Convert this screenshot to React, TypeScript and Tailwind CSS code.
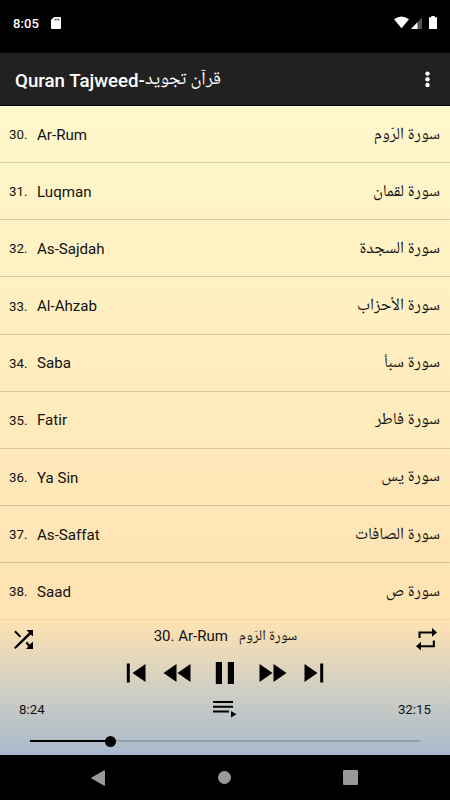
import type { ReactNode } from "react";

type Surah = {
  id: number;
  name: string;
  arabic: string;
};

const SURAHS: Surah[] = [
  { id: 30, name: "Ar-Rum", arabic: "سورة الرَوم" },
  { id: 31, name: "Luqman", arabic: "سورة لقمان" },
  { id: 32, name: "As-Sajdah", arabic: "سورة السجدة" },
  { id: 33, name: "Al-Ahzab", arabic: "سورة الأحزاب" },
  { id: 34, name: "Saba", arabic: "سورة سبأ" },
  { id: 35, name: "Fatir", arabic: "سورة فاطر" },
  { id: 36, name: "Ya Sin", arabic: "سورة يس" },
  { id: 37, name: "As-Saffat", arabic: "سورة الصافات" },
  { id: 38, name: "Saad", arabic: "سورة ص" }
];

const ARABIC = "font-['Noto_Naskh_Arabic_UI','Noto_Sans_Arabic','DejaVu_Sans',sans-serif]";

function StatusBar() {
  return (
    <div className="flex h-[53px] shrink-0 items-start bg-black pl-[13px] text-white">
      <span className="mt-[15px] text-[13px] leading-[17px] font-medium tracking-[0.1px]">8:05</span>
      <svg className="mt-[17px] ml-[12px]" width="10" height="12" viewBox="0 0 10 12">
        <path fill="#fff" d="M3 0h6q1 0 1 1v10q0 1-1 1H1q-1 0-1-1V3z" />
        <path stroke="#000" strokeWidth=".8" d="M4.2 1.6v2M6 1.6v2M7.8 1.6v2" />
      </svg>
      <div className="mt-[16px] ml-auto flex pr-[13px]">
        <svg width="15" height="13" viewBox="0 0 15 13">
          <path fill="#fff" d="M0 3.2Q7.5-2.4 15 3.2L7.5 12.2z" />
        </svg>
        <svg className="ml-[2px]" width="11" height="13" viewBox="0 0 11 13">
          <path fill="#555" d="M11 1.5V13H0z" />
          <path fill="#fff" d="M6.5 6.2V13H0z" />
        </svg>
        <svg className="ml-[7px]" width="8" height="13" viewBox="0 0 8 13">
          <path fill="#fff" d="M2.3 0h3.4v1.2H8V13H0V1.2h2.3z" />
        </svg>
      </div>
    </div>
  );
}

function AppBar() {
  return (
    <header className="flex h-[53px] shrink-0 items-center border-b border-black bg-[#212121] pr-[20px] pl-[15px] text-white">
      <h1 className="flex items-center pt-[3px] text-[18.7px] leading-[24px] font-medium whitespace-nowrap">
        <span>Quran Tajweed-</span>
        <span dir="rtl" className={`${ARABIC} pb-[2px] text-[18.6px] font-normal`}>قرآن تجويد</span>
      </h1>
      <svg className="mt-px ml-auto" width="5" height="17" viewBox="0 0 5 17">
        <circle cx="2.5" cy="2.6" r="2.2" fill="#fff" />
        <circle cx="2.5" cy="8.3" r="2.2" fill="#fff" />
        <circle cx="2.5" cy="14" r="2.2" fill="#fff" />
      </svg>
    </header>
  );
}

function SurahRow({ id, name, arabic }: Surah) {
  return (
    <li className="flex h-[57.15px] items-center border-b border-black/15 pt-px pr-[10px] pl-[9px] last:border-black/5">
      <span className="w-[28px] pt-px text-[13.3px]">{id}.</span>
      <span className="pt-px text-[15.1px]">{name}</span>
      <span dir="rtl" className={`${ARABIC} ml-auto text-[16.8px] leading-[24px]`}>{arabic}</span>
    </li>
  );
}

function Glyph({ w, h, children }: { w: number; h: number; children: ReactNode }) {
  return (
    <svg width={w} height={h} viewBox={`0 0 ${w} ${h}`} fill="#000">
      {children}
    </svg>
  );
}

function Player() {
  return (
    <section className="h-[135px] bg-linear-to-b from-[#ffe2b1] via-[#cfcec2] via-52% to-[#a9bacd]">
      <div className="flex h-[36px] items-start justify-between pr-[13px] pl-[14px]">
        <div className="w-[60px] pt-[10px]">
          <Glyph w={19} h={19}>
            <path d="M1.6.6l5.6 5.6L5.8 7.6.2 2zM12.4 0H19v6.6l-2.2-2.2L1.5 19 0 17.6 15 2.5zM13 11.5l2.6 2.9 3.4-2.6V19h-7l2.3-2.6-2.7-3.2z" />
          </Glyph>
        </div>
        <div className="flex items-center gap-[11px] pt-[6px] text-[15px] leading-[20px] whitespace-nowrap">
          <span>30. Ar-Rum</span>
          <span dir="rtl" className={`${ARABIC} text-[14.8px]`}>سورة الرَوم</span>
        </div>
        <div className="flex w-[60px] justify-end pt-[8px]">
          <Glyph w={21} h={23}>
            <path d="M2.5 10V3.6H16V0l5 4.6-5 4.2V5.6H4.6V10zM18.9 12.6v6.7H5v3.2l-5-4.2 5-4.5v3.5h11.8v-4.7z" />
          </Glyph>
        </div>
      </div>
      <div className="flex h-[33px] items-center justify-center">
        <Glyph w={20} h={20}>
          <path d="M.8.5h3v19h-3zM19.5 1v18L6.5 10z" />
        </Glyph>
        <div className="w-[17px]" />
        <Glyph w={28} h={20}>
          <path d="M13.5 1v18L.5 10zM27.5 1v18l-13-9z" />
        </Glyph>
        <div className="w-[24px]" />
        <Glyph w={20} h={22}>
          <path d="M.8 0H7v22H.8zM12.8 0H19v22h-6.2z" />
        </Glyph>
        <div className="w-[24px]" />
        <Glyph w={28} h={20}>
          <path d="M.5 1v18l13-9zM14.5 1v18l13-9z" />
        </Glyph>
        <div className="w-[17px]" />
        <Glyph w={20} h={20}>
          <path d="M.5 1v18l13-9zM16.2.5h3v19h-3z" />
        </Glyph>
      </div>
      <div className="flex h-[40px] items-center justify-between pr-[19px] pl-[19px] text-[13.3px]">
        <span className="w-[60px] pt-[2px]">8:24</span>
        <Glyph w={24} h={18}>
          <path d="M0 1h20v2H0zM0 5.8h20v2H0zM0 10.5h16v2H0zM18 11v6.4l5.5-3.2z" />
        </Glyph>
        <span className="w-[60px] pt-[2px] text-right">32:15</span>
      </div>
      <div className="flex h-[24px] items-center px-[30px]">
        <div className="h-[2px] w-[76px] bg-black" />
        <div className="-ml-px h-[11px] w-[11px] rounded-full bg-black" />
        <div className="h-[2px] flex-1 bg-[#93a0ac]" />
      </div>
    </section>
  );
}

function NavBar() {
  return (
    <nav className="flex h-[45px] shrink-0 items-center justify-between bg-black pr-[92px] pl-[91px]">
      <svg width="14" height="16" viewBox="0 0 14 16">
        <path fill="#999" d="M12.8.5q1.2-.5 1.2.8v13.4q0 1.3-1.2.8L.6 8.6Q-.3 8 .6 7.4z" />
      </svg>
      <div className="h-[13px] w-[13px] rounded-full bg-[#999]" />
      <div className="h-[15px] w-[15px] rounded-[1px] bg-[#999]" />
    </nav>
  );
}

export default function App() {
  return (
    <div className="flex h-[800px] w-[450px] flex-col overflow-hidden bg-black font-[Roboto,sans-serif] text-[#111]">
      <StatusBar />
      <AppBar />
      <main className="flex h-[649px] shrink-0 flex-col">
        <ul className="h-[514px] bg-linear-to-b from-[#fff8cc] to-[#ffe2b1]">
          {SURAHS.map((s) => (
            <SurahRow key={s.id} {...s} />
          ))}
        </ul>
        <Player />
      </main>
      <NavBar />
    </div>
  );
}
